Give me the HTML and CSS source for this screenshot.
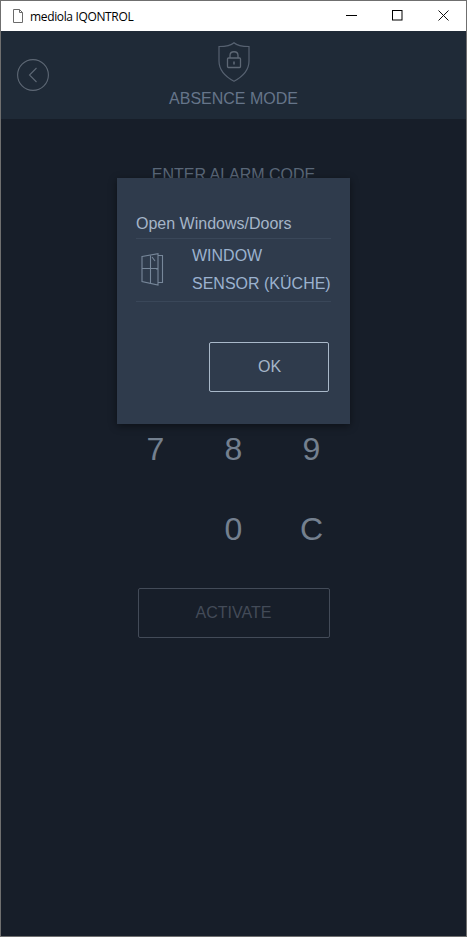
FILE: index.html
```html
<!DOCTYPE html>
<html lang="en">
<head>
<meta charset="utf-8">
<title>mediola IQONTROL</title>
<link rel="stylesheet" href="styles.css">
</head>
<body>
<div class="window">
  <div class="titlebar">
    <svg class="file-icon" width="12" height="14" viewBox="0 0 12 14"><path d="M1.500 .5H7.500L10.500 3.500V13.500H1.500Z M7.500 .5V3.500H10.500" fill="#fff" stroke="#6b6b6b"/></svg>
    <span class="title">mediola IQONTROL</span>
    <div class="controls">
      <span class="ctl"><svg width="11" height="11" viewBox="0 0 11 11"><path d="M0 5.500H11" stroke="#000"/></svg></span>
      <span class="ctl"><svg width="11" height="11" viewBox="0 0 11 11"><rect x=".5" y=".5" width="9.500" height="9.500" fill="none" stroke="#000"/></svg></span>
      <span class="ctl"><svg width="11" height="11" viewBox="0 0 11 11"><path d="M.5 .5L10.500 10.500M10.500 .5L.5 10.500" stroke="#111"/></svg></span>
    </div>
  </div>
  <header class="header">
    <button class="back" aria-label="Back"><svg width="32" height="32" viewBox="0 0 32 32"><circle cx="16" cy="16" r="15.400" fill="none" stroke="#5e6875" stroke-width="1.100"/><path d="M19.500 9L12.500 16L19.500 23" fill="none" stroke="#5e6875" stroke-width="1.100"/></svg></button>
    <svg class="shield" width="32" height="40" viewBox="0 0 32 40"><path d="M16 .7C13 3.500 6 4.500 1 4.500V19C1 28 8 35 16 39.300C24 35 31 28 31 19V4.500C26 4.500 19 3.500 16 .7Z" fill="none" stroke="#566170" stroke-width="1.200"/><rect x="9.500" y="16" width="13" height="9.500" rx="1" fill="none" stroke="#5e6875" stroke-width="1.300"/><path d="M12 16V13.500C12 8.500 20 8.500 20 13.500V16" fill="none" stroke="#5e6875" stroke-width="1.300"/><path d="M16 19.500V22.500" stroke="#5e6875" stroke-width="1.600"/></svg>
    <div class="mode">ABSENCE MODE</div>
  </header>
  <main class="content">
    <div class="prompt">ENTER ALARM CODE</div>
    <div class="keypad">
      <span>7</span><span>8</span><span>9</span>
      <span></span><span>0</span><span>C</span>
    </div>
    <div class="activate">ACTIVATE</div>
  </main>
  <div class="modal">
    <div class="modal-title">Open Windows/Doors</div>
    <div class="sensor">
      <svg class="window-icon" width="24" height="33" viewBox="0 0 24 33"><g fill="none" stroke="#77879a" stroke-width="1.100"><path d="M1 3.500L17 .7V32L1 28.500Z"/><path d="M17 2.500H21.500V29.500H17"/><path d="M1 15.500H17M9.500 2.500V30"/><path d="M11 4L14 8"/><path d="M15 16H17"/></g></svg>
      <div class="sensor-name">WINDOW<br>SENSOR (KÜCHE)</div>
    </div>
    <div class="modal-actions"><button class="ok">OK</button></div>
  </div>
</div>
</body>
</html>
```
FILE: styles.css
```css
* { box-sizing: border-box; }
html, body { margin: 0; height: 100%; overflow: hidden; }
body { font-family: "Liberation Sans", Arial, sans-serif; }
.window {
  position: relative;
  height: 937px;
  width: 467px;
  border: 1px solid #6f6f6f;
  display: flex;
  flex-direction: column;
  background: #171e29;
}
.titlebar {
  height: 30px;
  flex: none;
  background: #fff;
  display: flex;
  align-items: center;
  padding-left: 11px;
}
.file-icon { flex: none; margin-right: 6px; margin-top: -1px; }
.title {
  font-family: "Open Sans", "Noto Sans", sans-serif;
  font-size: 12px;
  color: #000;
  letter-spacing: -.35px;
}
.controls { margin-left: auto; display: flex; }
.ctl {
  width: 46px;
  height: 30px;
  display: flex;
  align-items: center;
  justify-content: center;
}
.controls .ctl svg { display: block; margin-top: -1px; }
.header {
  position: relative;
  height: 88px;
  flex: none;
  background: #1f2a37;
  display: flex;
  flex-direction: column;
  align-items: center;
  padding-top: 11px;
}
.back {
  position: absolute;
  left: 16px;
  top: 28px;
  padding: 0;
  width: 32px;
  height: 32px;
  background: none;
  border: 0;
}
.back svg, .shield { display: block; }
.mode {
  margin-top: 8px;
  font-size: 16px;
  line-height: 18px;
  color: #66758a;
}
.content {
  flex: 1;
  display: flex;
  flex-direction: column;
  align-items: center;
}
.prompt {
  margin-top: 47px;
  font-size: 16px;
  line-height: 18px;
  color: #5a6778;
}
.keypad {
  margin-top: 225px;
  display: grid;
  grid-template-columns: repeat(3, 78px);
  grid-auto-rows: 80px;
  text-align: center;
  font-size: 32px;
  line-height: 80px;
  color: #74808f;
}
.activate {
  margin-top: 19px;
  width: 192px;
  height: 50px;
  border: 1px solid #434b58;
  border-radius: 2px;
  text-align: center;
  font-size: 16px;
  line-height: 47px;
  color: #434b58;
}
.modal {
  position: absolute;
  left: 116px;
  top: 177px;
  width: 233px;
  height: 246px;
  background: #2f3b4c;
  box-shadow: 0 2px 8px rgba(0, 0, 0, .45);
  padding: 35px 19px 0 19px;
}
.modal-title {
  height: 26px;
  font-size: 16px;
  line-height: 21px;
  color: #a5b5c8;
  border-bottom: 1px solid #3a4759;
}
.sensor {
  height: 63px;
  display: flex;
  align-items: center;
  border-bottom: 1px solid #3a4759;
}
.window-icon { flex: none; margin-left: 5px; margin-right: 27px; margin-top: -1px; }
.sensor-name {
  font-size: 16px;
  line-height: 28px;
  color: #9bb2cf;
  white-space: nowrap;
}
.modal-actions {
  margin-top: 40px;
  display: flex;
  justify-content: flex-end;
  margin-right: 2px;
}
.ok {
  width: 120px;
  height: 50px;
  background: none;
  border: 1px solid #a9b8c9;
  border-radius: 2px;
  font-family: inherit;
  font-size: 16px;
  color: #a5b5c8;
  padding: 0 0 0 1px;
}
```
